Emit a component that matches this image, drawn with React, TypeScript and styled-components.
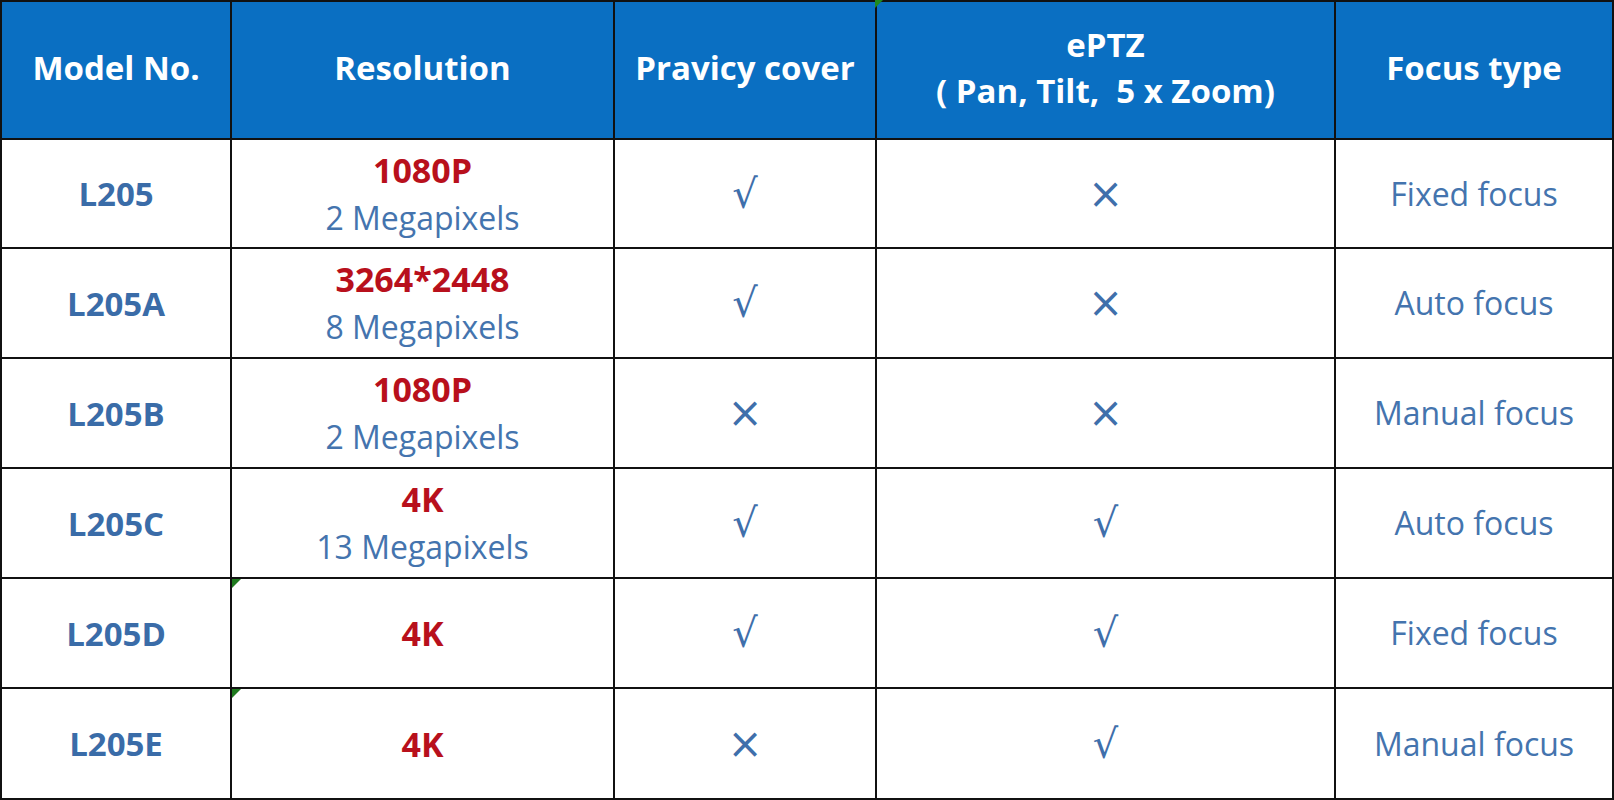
import React from 'react';
import styled, { createGlobalStyle } from 'styled-components';

type Row = {
  model: string;
  res: string;
  mp?: string;
  cover: boolean;
  ptz: boolean;
  focus: string;
  flag?: boolean;
};

const rows: Row[] = [
  { model: 'L205', res: '1080P', mp: '2 Megapixels', cover: true, ptz: false, focus: 'Fixed focus' },
  { model: 'L205A', res: '3264*2448', mp: '8 Megapixels', cover: true, ptz: false, focus: 'Auto focus' },
  { model: 'L205B', res: '1080P', mp: '2 Megapixels', cover: false, ptz: false, focus: 'Manual focus' },
  { model: 'L205C', res: '4K', mp: '13 Megapixels', cover: true, ptz: true, focus: 'Auto focus' },
  { model: 'L205D', res: '4K', cover: true, ptz: true, focus: 'Fixed focus', flag: true },
  { model: 'L205E', res: '4K', cover: false, ptz: true, focus: 'Manual focus', flag: true },
];

const App = () => {
  return (
    <>
      <GlobalStyle />
      <Table>
        <Head>Model No.</Head>
        <Head>Resolution</Head>
        <Head>Pravicy cover</Head>
        <Head flag>
          <span>ePTZ</span>
          <span>( Pan, Tilt,&nbsp;&nbsp;5 x Zoom)</span>
        </Head>
        <Head>Focus type</Head>

        {rows.map((r) => (
          <React.Fragment key={r.model}>
            <Cell>
              <Model>{r.model}</Model>
            </Cell>
            <Cell flag={r.flag}>
              <Res>{r.res}</Res>
              {r.mp && <Plain>{r.mp}</Plain>}
            </Cell>
            <Cell>{r.cover ? <Check>√</Check> : <Cross>×</Cross>}</Cell>
            <Cell>{r.ptz ? <Check>√</Check> : <Cross>×</Cross>}</Cell>
            <Cell>
              <Plain>{r.focus}</Plain>
            </Cell>
          </React.Fragment>
        ))}
      </Table>
    </>
  );
};

export default App;

const GlobalStyle = createGlobalStyle`
  html, body {
    margin: 0;
    padding: 0;
    background: #fff;
    overflow: hidden;
  }
  body {
    font-family: 'Open Sans', 'Noto Sans', 'DejaVu Sans', sans-serif;
  }
`;

const Table = styled.div`
  width: 1614px;
  height: 800px;
  box-sizing: border-box;
  padding: 2px;
  gap: 2px;
  background: #111;
  display: grid;
  grid-template-columns: 228px 381px 260px 457px 1fr;
  grid-template-rows: 136px 107px repeat(4, 108px) 1fr;
`;

const Head = styled.div<{ flag?: boolean }>`
  position: relative;
  background: #0a6fc2;
  color: #fff;
  font-weight: 700;
  font-size: 33px;
  line-height: 46px;
  display: flex;
  flex-direction: column;
  align-items: center;
  justify-content: center;
  text-align: center;
  padding-bottom: 4px;

  &::before {
    content: '';
    display: ${(p) => (p.flag ? 'block' : 'none')};
    position: absolute;
    top: -2px;
    left: -2px;
    border-top: 8px solid #1f8a1f;
    border-right: 8px solid transparent;
  }
`;

const Cell = styled.div<{ flag?: boolean }>`
  position: relative;
  background: #fff;
  display: flex;
  flex-direction: column;
  align-items: center;
  justify-content: center;
  text-align: center;

  &::before {
    content: '';
    display: ${(p) => (p.flag ? 'block' : 'none')};
    position: absolute;
    top: 0;
    left: 0;
    border-top: 9px solid #1f7a1f;
    border-right: 9px solid transparent;
  }
`;

const Model = styled.span`
  color: #3a6ca8;
  font-weight: 700;
  font-size: 33px;
`;

const Res = styled.span`
  color: #b8101c;
  font-weight: 700;
  font-size: 34px;
  line-height: 48px;
`;

const Plain = styled.span`
  color: #4474ae;
  font-size: 32px;
  line-height: 48px;
`;

const Check = styled.span`
  color: #3f6fab;
  font-family: 'DejaVu Sans', sans-serif;
  font-size: 40px;
  line-height: 1;
`;

const Cross = styled.span`
  color: #3f6fab;
  font-family: 'DejaVu Sans', sans-serif;
  font-size: 42px;
  line-height: 1;
`;
